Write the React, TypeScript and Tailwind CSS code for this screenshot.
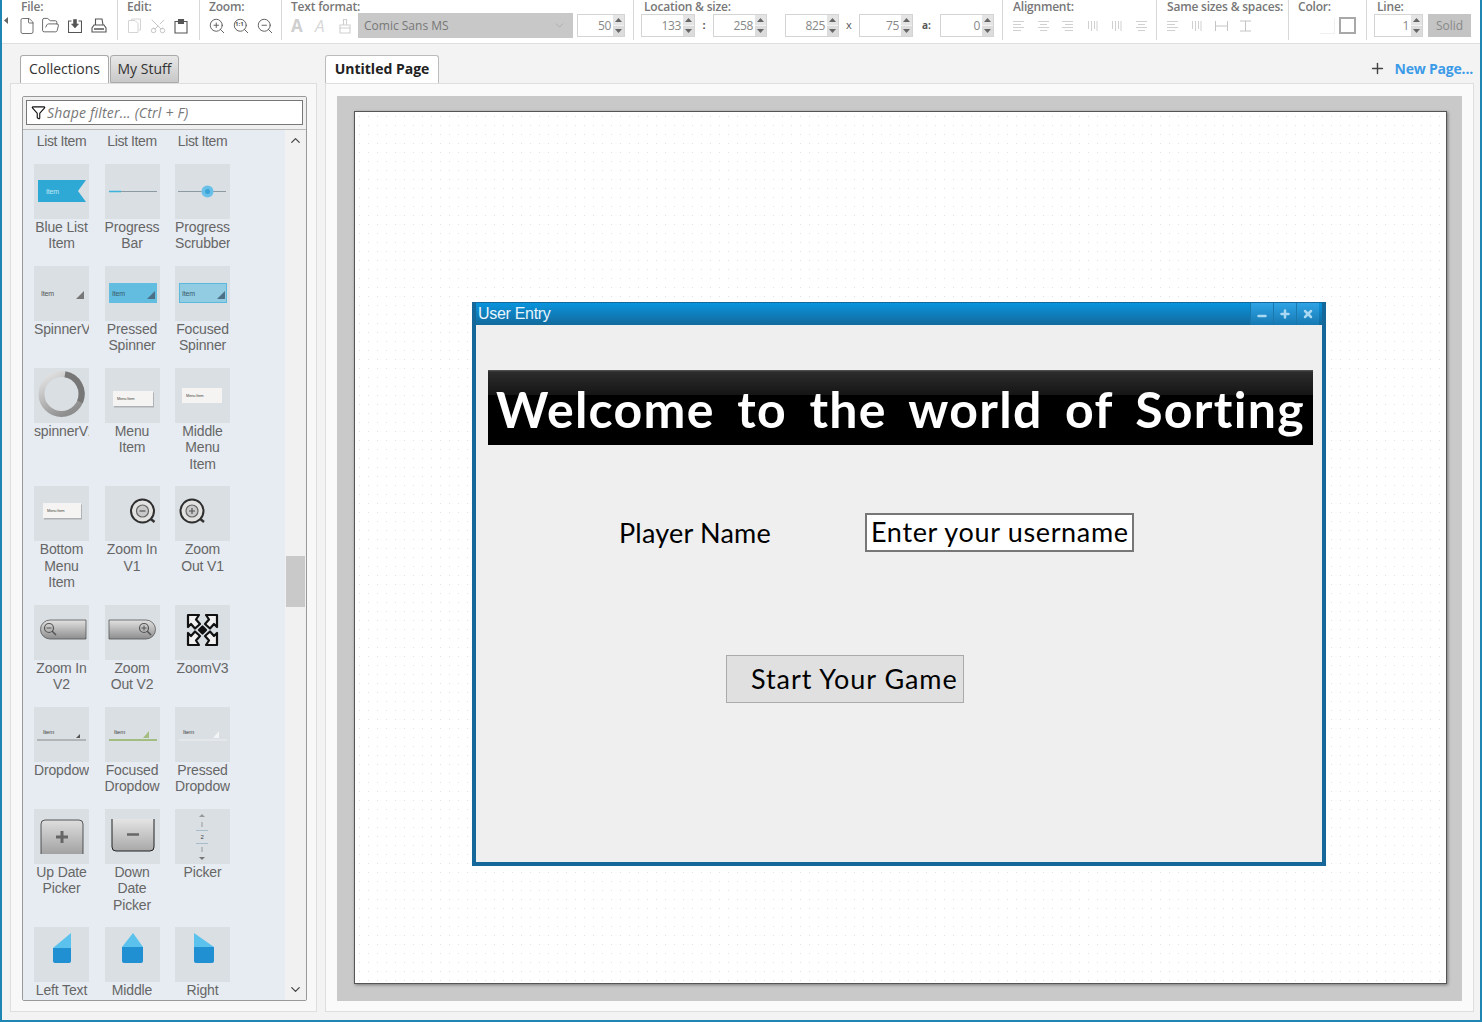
import React from 'react'
import { ChevronDown, ChevronUp, File, Filter, FolderOpen, Minus, Plus, Scissors, Search, X, ZoomIn, ZoomOut } from 'lucide-react'

const uiFont = 'font-["Open_Sans",sans-serif]'
const comicFont = 'font-["Comic_Sans_MS",Lato,sans-serif]'

function Group(props: { label: string; className: string; children: React.ReactNode }) {
  return (
    <div className={`h-[40px] shrink-0 border-r border-[#d8d8d8] ${props.className}`}>
      <div className="h-[13px] text-[12px] leading-[13px] font-semibold tracking-[-0.2px] text-[#777] whitespace-nowrap">{props.label}</div>
      <div className="flex h-[25px] items-center">{props.children}</div>
    </div>
  )
}

function Spinner(props: { value: string; className: string }) {
  return (
    <div className={`flex h-[23px] items-center border border-[#d4d4d4] bg-white ${props.className}`}>
      <span className="flex-1 pr-[2px] text-right text-[12px] tracking-[-0.4px] text-[#888]">{props.value}</span>
      <div className="flex h-full w-[11px] flex-col justify-center gap-[1px] bg-[#f2f2f2]">
        <svg width="11" height="10" viewBox="0 0 11 10"><rect width="11" height="10" fill="#e4e4e4" /><path d="M2 7 L5.5 3 L9 7Z" fill="#666" /></svg>
        <svg width="11" height="10" viewBox="0 0 11 10"><rect width="11" height="10" fill="#dcdcdc" /><path d="M2 3 L5.5 7 L9 3Z" fill="#666" /></svg>
      </div>
    </div>
  )
}

function LineIcon(props: { kind: 'left' | 'center' | 'right' | 'vert' }) {
  const rows = [
    [0, 10],
    [2, 8],
    [0, 10],
    [2, 8],
  ]
  if (props.kind === 'vert') {
    return (
      <svg width="11" height="12" viewBox="0 0 11 12" stroke="#d0d0d0" strokeWidth="1">
        <path d="M1.5 1V9M4.5 1V11M7.5 1V9M10 1V11" />
      </svg>
    )
  }
  return (
    <svg width="11" height="12" viewBox="0 0 11 12" stroke="#d0d0d0" strokeWidth="1">
      {rows.map((r, i) => {
        const x1 = props.kind === 'left' ? 0 : props.kind === 'right' ? r[0] * 1.5 : r[0]
        const x2 = props.kind === 'left' ? 11 - r[0] * 1.5 : props.kind === 'right' ? 11 : 11 - r[0]
        return <path key={i} d={`M${x1} ${1.5 + i * 3}H${x2}`} />
      })}
    </svg>
  )
}

function Toolbar() {
  return (
    <div className={`flex h-[44px] shrink-0 border-b border-[#dedede] bg-white ${uiFont}`}>
      <div className="flex h-[40px] w-[19px] shrink-0 items-center pl-[2px]">
        <svg width="4" height="7" viewBox="0 0 4 7"><path d="M4 0V7L0 3.5Z" fill="#666" /></svg>
      </div>
      <Group label="File:" className="w-[97px]">
        <div className="flex items-center text-[#555]">
          <File size={18} strokeWidth={1.1} className="-ml-[3px]" />
          <FolderOpen size={19} strokeWidth={1.1} className="ml-[5px]" />
          <svg width="14" height="14" viewBox="0 0 14 14" fill="none" stroke="currentColor" strokeWidth="1.1" className="ml-[8px]">
            <path d="M3.5 2H0.5V13.5H13.5V2H10.5" />
            <path d="M5.5 0.5V5H3.5L7 9L10.5 5H8.5V0.5Z" fill="currentColor" strokeWidth="0.6" />
          </svg>
          <svg width="16" height="15" viewBox="0 0 16 15" fill="none" stroke="currentColor" strokeWidth="1.1" className="ml-[9px]">
            <path d="M4.5 7V1H11L12 7" />
            <path d="M3 7H13L15 10V14H1V10Z" />
            <path d="M3 11H13" strokeWidth="1.5" />
          </svg>
        </div>
      </Group>
      <Group label="Edit:" className="w-[82px] pl-[9px]">
        <div className="flex items-center">
          <svg width="13" height="15" viewBox="0 0 13 15" fill="none" stroke="#d4d4d4" strokeWidth="1" className="ml-px">
            <path d="M3.5 2.5V1H12.5V12H10.5" />
            <path d="M0.5 2.5H7L10 5.5V14.5H0.5Z" />
          </svg>
          <Scissors size={18} strokeWidth={1.3} className="ml-[8px] -rotate-90 text-[#c4c4c4]" />
          <svg width="14" height="16" viewBox="0 0 14 16" fill="none" stroke="#555" strokeWidth="1.1" className="ml-[7px]">
            <path d="M4 3.5H1V15H13V3.5H10" />
            <path d="M4.5 5.5V1.5H9.5V5.5Z" fill="#555" />
          </svg>
        </div>
      </Group>
      <Group label="Zoom:" className="w-[82px] pl-[9px]">
        <div className="-ml-px flex items-center gap-[6px] text-[#555]">
          <ZoomIn size={18} strokeWidth={1.2} />
          <div className="relative h-[18px] w-[18px]">
            <Search size={18} strokeWidth={1.2} />
            <span className="absolute left-[3px] top-[2px] text-[6px] leading-[10px] font-bold">1:1</span>
          </div>
          <ZoomOut size={18} strokeWidth={1.2} />
        </div>
      </Group>
      <Group label="Text format:" className="w-[352px] pl-[9px]">
        <div className="flex items-center">
          <span className="w-[24px] text-[17px] font-bold leading-none text-[#cfcfcf] font-['Open_Sans']">A</span>
          <span className="w-[24px] text-[17px] italic leading-none text-[#d8d8d8]">A</span>
          <svg width="12" height="16" viewBox="0 0 12 16" fill="none" stroke="#cfcfcf" strokeWidth="1.1" className="mr-[7px]">
            <path d="M4.5 7V1.5H7.5V7" />
            <path d="M1 7H11V10H1Z" />
            <path d="M1 10V15H11V10" />
          </svg>
          <div className="flex h-[25px] w-[215px] items-center justify-between bg-[#c8c8c8] pl-[6px] pr-[7px] text-[12px] text-[#777]">
            <span>Comic Sans MS</span>
            <ChevronDown size={13} strokeWidth={1} className="text-[#999]" />
          </div>
          <Spinner value="50" className="ml-[4px] w-[48px]" />
        </div>
      </Group>
      <Group label="Location & size:" className="w-[369px] pl-[10px]">
        <div className="-ml-[3px] flex items-center">
          <Spinner value="133" className="w-[54px]" />
          <span className="w-[18px] text-center text-[11px] font-bold text-[#555]">:</span>
          <Spinner value="258" className="w-[54px]" />
          <Spinner value="825" className="ml-[18px] w-[54px]" />
          <span className="w-[20px] text-center text-[11px] text-[#555]">x</span>
          <Spinner value="75" className="w-[54px]" />
          <span className="w-[27px] text-center text-[10px] font-bold text-[#555]">a:</span>
          <Spinner value="0" className="w-[54px]" />
        </div>
      </Group>
      <Group label="Alignment:" className="w-[154px] pl-[10px]">
        <div className="flex items-center gap-[13.5px]">
          <LineIcon kind="left" />
          <LineIcon kind="center" />
          <LineIcon kind="right" />
          <LineIcon kind="vert" />
          <LineIcon kind="vert" />
          <LineIcon kind="center" />
        </div>
      </Group>
      <Group label="Same sizes & spaces:" className="w-[132px] pl-[10px]">
        <div className="flex items-center gap-[13px]">
          <LineIcon kind="left" />
          <LineIcon kind="vert" />
          <svg width="13" height="12" viewBox="0 0 13 12" fill="none" stroke="#c4c4c4"><path d="M0.5 1V11M12.5 1V11M1 6H12" /></svg>
          <svg width="13" height="12" viewBox="0 0 13 12" fill="none" stroke="#c4c4c4" className="-ml-[2px]"><path d="M1 1H12M1 11H12M6.5 1V11" /></svg>
        </div>
      </Group>
      <Group label="Color:" className="w-[78px] pl-[9px]">
        <div className="ml-[22px] h-[16px] w-[15px] border-b border-r border-[#f0f0f0]" />
        <div className="ml-[4px] mt-[-1px] h-[17px] w-[17px] border-2 border-[#a8a8a8] bg-white" />
      </Group>
      <Group label="Line:" className="flex-1 border-r-0 pl-[10px]">
        <div className="-ml-[3px] flex items-center">
          <Spinner value="1" className="w-[49px]" />
          <div className="ml-[5px] flex h-[23px] w-[43px] items-center justify-center bg-[#c4c4c4] text-[12px] text-[#888]">Solid</div>
        </div>
      </Group>
    </div>
  )
}

// thumbnails are drawn on a 55x55 tile
function Thumb(props: { name: string }) {
  const itemText = (x: number, y: number, fill: string, size = 7) => (
    <text x={x} y={y} fontSize={size} fill={fill} fontFamily="Liberation Sans">Item</text>
  )
  const tri = (fill: string) => <path d="M50 25V33H42Z" fill={fill} />
  const menu = (x: number, y: number, w: number, shadow: boolean) => (
    <>
      {shadow && <rect x={x + 1} y={y + 1.5} width={w} height={15} fill="#aeb2b5" />}
      <rect x={x} y={y} width={w} height={15} fill="#f5f4f2" />
      <text x={x + 4} y={y + 9} fontSize="4" fill="#444" fontFamily="Liberation Sans">Menu Item</text>
    </>
  )
  const lens = (cx: number, cy: number, plus: boolean) => (
    <>
      <path d={`M${cx + 7} ${cy + 7}L${cx + 12} ${cy + 11}`} stroke="#333" strokeWidth="2.5" />
      <circle cx={cx} cy={cy} r="11.5" fill="#e2e2e0" stroke="#2e2e2e" strokeWidth="2" />
      <circle cx={cx} cy={cy} r="6" fill="#c9c9c9" stroke="#666" strokeWidth="1.2" />
      <path d={plus ? `M${cx - 3} ${cy}H${cx + 3}M${cx} ${cy - 3}V${cy + 3}` : `M${cx - 3} ${cy}H${cx + 3}`} stroke="#555" strokeWidth="1.2" />
    </>
  )
  const smallLens = (cx: number, cy: number, plus: boolean) => (
    <>
      <circle cx={cx} cy={cy} r="4.5" fill="none" stroke="#555" strokeWidth="1.2" />
      <path d={`M${cx + 3} ${cy + 3}L${cx + 7} ${cy + 7}`} stroke="#555" strokeWidth="1.6" />
      <path d={plus ? `M${cx - 2.5} ${cy}H${cx + 2.5}M${cx} ${cy - 2.5}V${cy + 2.5}` : `M${cx - 2.5} ${cy}H${cx + 2.5}`} stroke="#555" />
    </>
  )
  const arrow = 'M13 10H24L21 14.5L25 19L20 23.5L16 19L13 22Z'

  let body: React.ReactNode = null
  switch (props.name) {
    case 'blue':
      body = <><path d="M4 16H52L44 27L52 38H4Z" fill="#2ea8d5" />{itemText(12, 29.5, '#bfe8f6')}</>
      break
    case 'bar':
      body = <><path d="M4 27.5H52" stroke="#8c9aa3" /><path d="M4 27.5H16" stroke="#3cb2dc" strokeWidth="1.4" /></>
      break
    case 'scrub':
      body = <><path d="M3 27.5H51" stroke="#8c9aa3" /><circle cx="32.5" cy="27.5" r="6" fill="#68c0e8" /><circle cx="32.5" cy="27.5" r="2.5" fill="#3ba2d8" /></>
      break
    case 'spinner':
      body = <>{itemText(7, 30, '#555')}{tri('#777')}</>
      break
    case 'pressed':
      body = <><rect x="4" y="17" width="48" height="20" fill="#62bde0" />{itemText(7, 30, '#3a5a6a')}{tri('#4b6f85')}</>
      break
    case 'focused':
      body = <><rect x="4.5" y="17.5" width="47" height="19" fill="#92cce2" stroke="#5cb8dc" />{itemText(7, 30, '#3a5a6a')}{tri('#4b6f85')}</>
      break
    case 'ring':
      body = (
        <>
          <defs>
            <linearGradient id="ringG" x1="0" y1="0" x2="0.6" y2="1">
              <stop offset="0" stopColor="#e8e8e8" />
              <stop offset="1" stopColor="#8e8e8e" />
            </linearGradient>
          </defs>
          <circle cx="27.5" cy="26" r="20" fill="none" stroke="url(#ringG)" strokeWidth="6" />
          <path d="M31 6.3A20 20 0 0 1 46 34" fill="none" stroke="#777" strokeWidth="6" />
        </>
      )
      break
    case 'menu':
      body = menu(8, 23, 40, true)
      break
    case 'menuMid':
      body = menu(7, 20, 40, false)
      break
    case 'menuBot':
      body = menu(9, 17, 38, true)
      break
    case 'zi1':
      body = lens(37.5, 25, false)
      break
    case 'zo1':
      body = lens(17, 25, true)
      break
    case 'zi2':
      body = (
        <>
          <defs>
            <linearGradient id="pillG" x1="0" y1="0" x2="0" y2="1">
              <stop offset="0" stopColor="#e2e2e2" />
              <stop offset="1" stopColor="#8d8d8d" />
            </linearGradient>
          </defs>
          <path d="M16 15H52V34H16A9.5 9.5 0 0 1 16 15Z" fill="url(#pillG)" stroke="#555" strokeWidth="0.8" />
          {smallLens(15, 23, false)}
        </>
      )
      break
    case 'zo2':
      body = (
        <>
          <defs>
            <linearGradient id="pillH" x1="0" y1="0" x2="0" y2="1">
              <stop offset="0" stopColor="#e2e2e2" />
              <stop offset="1" stopColor="#8d8d8d" />
            </linearGradient>
          </defs>
          <path d="M4 15H41A9.5 9.5 0 0 1 41 34H4Z" fill="url(#pillH)" stroke="#555" strokeWidth="0.8" />
          {smallLens(39, 23, true)}
        </>
      )
      break
    case 'zv3':
      body = (
        <g fill="#f2f2f2" stroke="#111" strokeWidth="2.2" strokeLinejoin="round">
          <path d={arrow} />
          <path d={arrow} transform="matrix(-1 0 0 1 55 0)" />
          <path d={arrow} transform="matrix(1 0 0 -1 0 50)" />
          <path d={arrow} transform="matrix(-1 0 0 -1 55 50)" />
          <rect x="25" y="22.5" width="5" height="5" transform="rotate(45 27.5 25)" fill="#111" />
        </g>
      )
      break
    case 'dd':
      body = <><path d="M3 33H52" stroke="#8a8a8a" />{itemText(9, 27, '#444', 6)}<path d="M46 27V31H42Z" fill="#555" /></>
      break
    case 'ddF':
      body = <><path d="M4 33H52" stroke="#8fb060" strokeWidth="1.4" />{itemText(9, 27, '#444', 6)}<path d="M44 24V31H38Z" fill="#a4bd80" /></>
      break
    case 'ddP':
      body = <><path d="M4 33H52" stroke="#eef0f2" />{itemText(8, 27, '#444', 6)}<path d="M44 24V31H38Z" fill="#f2f4f5" /></>
      break
    case 'up':
      body = (
        <>
          <defs>
            <linearGradient id="upG" x1="0" y1="0" x2="0" y2="1">
              <stop offset="0" stopColor="#dedede" />
              <stop offset="1" stopColor="#a2a2a2" />
            </linearGradient>
          </defs>
          <path d="M7 45V15Q7 11 11 11H45Q49 11 49 15V45Z" fill="url(#upG)" />
          <path d="M7 45V15Q7 11 11 11H45Q49 11 49 15V45" fill="none" stroke="#333" strokeWidth="0.8" />
          <path d="M28 22V34M22 28H34" stroke="#666" strokeWidth="3" />
        </>
      )
      break
    case 'down':
      body = (
        <>
          <defs>
            <linearGradient id="dnG" x1="0" y1="0" x2="0" y2="1">
              <stop offset="0" stopColor="#e4e4e4" />
              <stop offset="1" stopColor="#a8a8a8" />
            </linearGradient>
          </defs>
          <path d="M7 10V38Q7 42 11 42H45Q49 42 49 38V10Z" fill="url(#dnG)" />
          <path d="M7 10V38Q7 42 11 42H45Q49 42 49 38V10" fill="none" stroke="#222" strokeWidth="1" />
          <path d="M22 25.5H34" stroke="#666" strokeWidth="2.6" />
        </>
      )
      break
    case 'picker':
      body = (
        <>
          <path d="M24 8L27 5L30 8Z" fill="#999" />
          <path d="M27 13V18" stroke="#999" />
          <path d="M21 21.5H33M21 34.5H33" stroke="#a9bcc9" />
          <text x="27" y="30" fontSize="6" textAnchor="middle" fill="#444" fontFamily="Liberation Sans">2</text>
          <path d="M27 38V43" stroke="#999" />
          <path d="M24 48L27 51L30 48Z" fill="#777" />
        </>
      )
      break
    case 'left':
      body = <><path d="M19 21L37 6V21Z" fill="#5ac2ec" /><path d="M19 21H37V34Q37 36 35 36H21Q19 36 19 34Z" fill="#2190d2" /></>
      break
    case 'mid':
      body = <><path d="M17 20L28 6L38 20Z" fill="#5ac2ec" /><path d="M17 20H38V34Q38 36 36 36H19Q17 36 17 34Z" fill="#2190d2" /></>
      break
    case 'right':
      body = <><path d="M19 6L39 20H19Z" fill="#5ac2ec" /><path d="M19 20H39V34Q39 36 37 36H21Q19 36 19 34Z" fill="#2190d2" /></>
      break
  }
  return (
    <svg width="55" height="55" viewBox="0 0 55 55" className="block bg-[#d9dfe3]">
      {body}
    </svg>
  )
}

const shapes: { thumb: string; label: string[] }[] = [
  { thumb: 'blue', label: ['Blue List', 'Item'] },
  { thumb: 'bar', label: ['Progress', 'Bar'] },
  { thumb: 'scrub', label: ['Progress', 'Scrubber'] },
  { thumb: 'spinner', label: ['SpinnerV'] },
  { thumb: 'pressed', label: ['Pressed', 'Spinner'] },
  { thumb: 'focused', label: ['Focused', 'Spinner'] },
  { thumb: 'ring', label: ['spinnerV2'] },
  { thumb: 'menu', label: ['Menu', 'Item'] },
  { thumb: 'menuMid', label: ['Middle', 'Menu', 'Item'] },
  { thumb: 'menuBot', label: ['Bottom', 'Menu', 'Item'] },
  { thumb: 'zi1', label: ['Zoom In', 'V1'] },
  { thumb: 'zo1', label: ['Zoom', 'Out V1'] },
  { thumb: 'zi2', label: ['Zoom In', 'V2'] },
  { thumb: 'zo2', label: ['Zoom', 'Out V2'] },
  { thumb: 'zv3', label: ['ZoomV3'] },
  { thumb: 'dd', label: ['Dropdow'] },
  { thumb: 'ddF', label: ['Focused', 'Dropdow'] },
  { thumb: 'ddP', label: ['Pressed', 'Dropdow'] },
  { thumb: 'up', label: ['Up Date', 'Picker'] },
  { thumb: 'down', label: ['Down', 'Date', 'Picker'] },
  { thumb: 'picker', label: ['Picker'] },
  { thumb: 'left', label: ['Left Text'] },
  { thumb: 'mid', label: ['Middle'] },
  { thumb: 'right', label: ['Right'] },
]

function Sidebar() {
  return (
    <div className={`flex w-[307px] shrink-0 flex-col ${uiFont}`}>
      <div className="flex h-[29px] items-end pl-[10px] text-[14px] text-[#333]">
        <div className="-mb-px flex h-[29px] w-[89px] items-center justify-center rounded-t-[3px] border border-b-white border-[#aaa] bg-white pb-[2px]">Collections</div>
        <div className="ml-px flex h-[28px] w-[69px] items-center justify-center rounded-t-[3px] border border-[#aaa] bg-gradient-to-b from-[#e8e8e8] to-[#c8c8c8] pb-[2px]">My Stuff</div>
      </div>
      <div className="h-[929px] border border-[#dedede] bg-[#f8f8f8] pl-[11px] pr-[9px] pt-[12px]">
        <div className="flex h-[905px] flex-col overflow-hidden rounded-[2px] border border-[#999]">
          <div className="h-[33px] shrink-0 border-b border-[#bbb] bg-[#f0f0f0] px-[3px] pt-[3px]">
            <div className="flex h-[25px] items-center border border-[#777] bg-white pl-[4px] text-[14px] italic text-[#777]">
              <Filter size={15} strokeWidth={1.8} className="text-[#111]" />
              <span className="ml-px tracking-[0.2px]">Shape filter... (Ctrl + F)</span>
            </div>
          </div>
          <div className="flex min-h-0 flex-1">
            <div className="w-[262px] overflow-hidden bg-[#e6ecf2] pl-[11px] pt-[3px] font-['Liberation_Sans',sans-serif] text-[14px] leading-[16.3px] tracking-[-0.15px] text-[#666]">
              <div className="grid grid-cols-[55px_55px_55px] gap-x-[15.5px] gap-y-[14.5px]">
                <div className="text-center tracking-[-0.4px] whitespace-nowrap">List Item</div>
                <div className="text-center tracking-[-0.4px] whitespace-nowrap">List Item</div>
                <div className="text-center tracking-[-0.4px] whitespace-nowrap">List Item</div>
                {shapes.map((s) => (
                  <div key={s.thumb} className="w-[55px]">
                    <Thumb name={s.thumb} />
                    <div className="overflow-hidden text-center">
                      {s.label.map((l) => (
                        <div key={l} className="whitespace-nowrap">{l}</div>
                      ))}
                    </div>
                  </div>
                ))}
              </div>
            </div>
            <div className="flex w-[21px] flex-col bg-[#f1f1f1]">
              <ChevronUp size={15} strokeWidth={2} className="mx-auto mt-[3px] text-[#444]" />
              <div className="ml-px mt-[408px] h-[51px] w-[19px] bg-[#c9c9c9]" />
              <ChevronDown size={15} strokeWidth={2} className="mx-auto mt-auto mb-[3px] text-[#444]" />
            </div>
          </div>
        </div>
      </div>
    </div>
  )
}

function WindowButton(props: { children: React.ReactNode }) {
  return <div className="flex h-full w-[23px] items-center justify-center border-l border-[#1a78ae] bg-gradient-to-b from-[#2ea4e6] to-[#1679b2] text-[#a9d8f2]">{props.children}</div>
}

function UserEntryWindow() {
  return (
    <div className="absolute left-[117px] top-[190px] flex h-[564px] w-[854px] flex-col border-x-4 border-b-4 border-t border-[#17689a] bg-[#efefef]">
      <div className="flex h-[22px] shrink-0 items-center justify-between bg-gradient-to-b from-[#0794de] to-[#126a9c] pl-[2px] pr-[3px] font-['Liberation_Sans',sans-serif] text-[16px] tracking-[-0.3px] text-[#e8f5fc]">
        <span>User Entry</span>
        <div className="flex h-full">
          <WindowButton><Minus size={12} strokeWidth={5} className="mt-[4px]" /></WindowButton>
          <WindowButton><Plus size={12} strokeWidth={5} /></WindowButton>
          <WindowButton><X size={12} strokeWidth={5} /></WindowButton>
        </div>
      </div>
      <div className={`relative flex-1 ${comicFont}`}>
        <div className="absolute left-[12px] top-[45px] flex h-[75px] w-[825px] items-center justify-center bg-black bg-[linear-gradient(#5a5a5a_0,#2c2c2c_2px,#151515_25px,#000_25px)] pt-[3px] text-[50px] font-bold tracking-[1.3px] [word-spacing:9px] text-white whitespace-nowrap">
          Welcome to the world of Sorting
        </div>
        <div className="absolute left-[143px] top-[190px] text-[27px] leading-[36px] tracking-[0.2px] text-black whitespace-nowrap">Player Name</div>
        <div className="absolute left-[389px] top-[188px] flex h-[39px] w-[269px] items-center border-2 border-[#777] bg-white pl-[4px] text-[27px] tracking-[0.65px] text-black whitespace-nowrap">Enter your username</div>
        <div className="absolute left-[250px] top-[330px] flex h-[48px] w-[238px] items-center border border-[#aaa] bg-[#e0e0e0] pl-[24px] text-[27px] tracking-[0.95px] text-black whitespace-nowrap">Start Your Game</div>
      </div>
    </div>
  )
}

function Canvas() {
  return (
    <div className={`ml-[8px] flex w-[1149px] shrink-0 flex-col ${uiFont}`}>
      <div className="flex h-[29px] items-end justify-between pr-[1px]">
        <div className="-mb-px flex h-[29px] w-[114px] items-center justify-center rounded-t-[3px] border border-b-white border-[#bbb] bg-white pb-[2px] text-[14px] font-bold text-[#222]">Untitled Page</div>
        <div className="mb-[4px] flex items-center">
          <Plus size={17} strokeWidth={2} className="text-[#444]" />
          <span className="ml-[9px] text-[14px] font-bold tracking-[-0.2px] text-[#3c9be8]">New Page...</span>
        </div>
      </div>
      <div className="h-[929px] border border-[#dedede] bg-[#fafafa] pb-[10px] pl-[11px] pr-[11px] pt-[12px]">
        <div className="h-full bg-[#c9c9c9] pb-[17px] pl-[17px] pr-[15px] pt-[15px]">
          <div className="relative h-full border border-[#555] bg-white bg-[radial-gradient(circle,#dfe3e6_0.7px,transparent_1px)] bg-[length:9px_9px] shadow-[1px_1px_3px_rgba(0,0,0,0.4)]">
            <UserEntryWindow />
          </div>
        </div>
      </div>
    </div>
  )
}

export default function App() {
  return (
    <div className="flex h-[1022px] w-[1482px] flex-col overflow-hidden border-x-2 border-b-2 border-x-[#1f86b4] border-b-[#1f86b4] bg-[#f3f3f3]">
      <Toolbar />
      <div className="flex pl-[8px] pt-[10px]">
        <Sidebar />
        <Canvas />
      </div>
    </div>
  )
}
